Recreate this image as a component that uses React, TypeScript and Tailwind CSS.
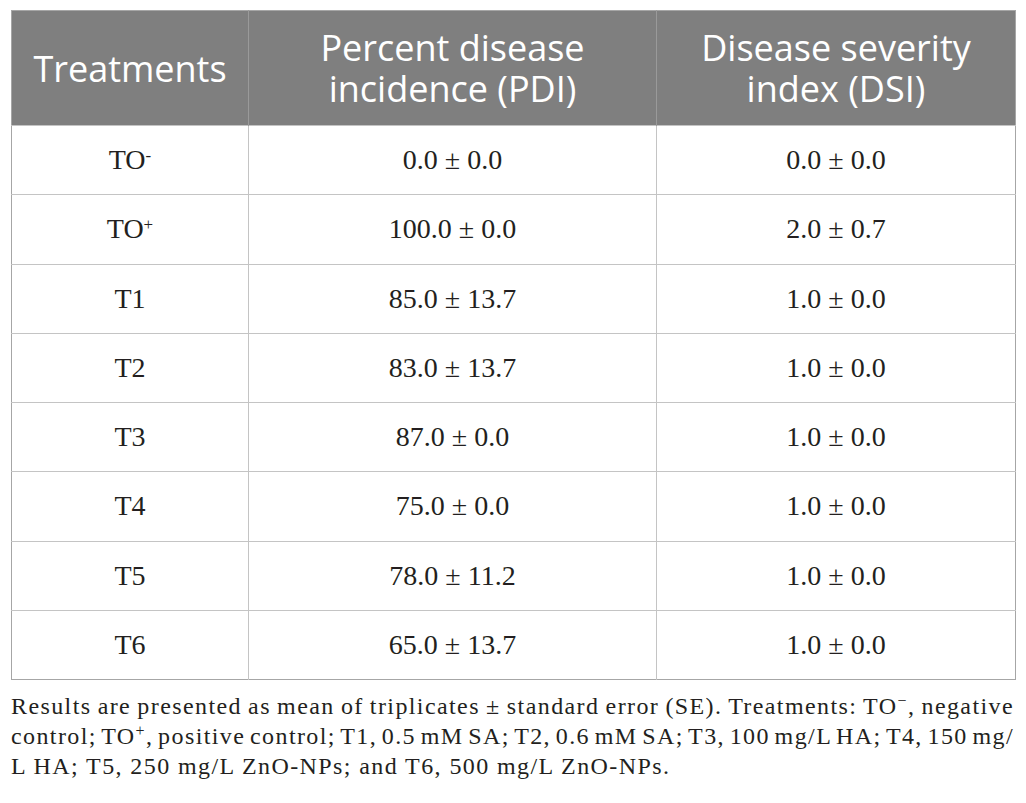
import React from 'react';

interface Row {
  treatment: React.ReactNode;
  pdi: string;
  dsi: string;
}

const rows: Row[] = [
  { treatment: <>TO<sup className="text-[17px]">-</sup></>, pdi: '0.0 ± 0.0', dsi: '0.0 ± 0.0' },
  { treatment: <>TO<sup className="text-[17px]">+</sup></>, pdi: '100.0 ± 0.0', dsi: '2.0 ± 0.7' },
  { treatment: 'T1', pdi: '85.0 ± 13.7', dsi: '1.0 ± 0.0' },
  { treatment: 'T2', pdi: '83.0 ± 13.7', dsi: '1.0 ± 0.0' },
  { treatment: 'T3', pdi: '87.0 ± 0.0', dsi: '1.0 ± 0.0' },
  { treatment: 'T4', pdi: '75.0 ± 0.0', dsi: '1.0 ± 0.0' },
  { treatment: 'T5', pdi: '78.0 ± 11.2', dsi: '1.0 ± 0.0' },
  { treatment: 'T6', pdi: '65.0 ± 13.7', dsi: '1.0 ± 0.0' },
];

export default function App() {
  return (
    <div className="min-h-[803px] w-[1026px] bg-white pl-[11px] pt-[10px]">
      <table className="w-[1004px] table-fixed border-collapse border border-[#a6a6a6]">
        <colgroup>
          <col className="w-[237px]" />
          <col className="w-[408px]" />
          <col className="w-[359px]" />
        </colgroup>
        <thead>
          {/* Header */}
          <tr className="h-[115px] bg-[#7f7f7f] font-['Open_Sans',sans-serif] text-[36px] leading-[41px] text-white">
            <th className="border-r border-[#9a9a9a] font-normal">Treatments</th>
            <th className="border-r border-[#9a9a9a] font-normal">
              Percent disease
              <br />
              incidence (PDI)
            </th>
            <th className="font-normal">
              Disease severity
              <br />
              index (DSI)
            </th>
          </tr>
        </thead>
        <tbody className="font-['Liberation_Serif',serif] text-[28px] text-[#231f20]">
          {rows.map((row, i) => (
            <tr key={i} className="h-[69.25px] border-t border-[#c4c4c4]">
              <td className="border-r border-[#c4c4c4] text-center">{row.treatment}</td>
              <td className="border-r border-[#c4c4c4] text-center">{row.pdi}</td>
              <td className="text-center">{row.dsi}</td>
            </tr>
          ))}
        </tbody>
      </table>

      {/* Footnote (justified lines) */}
      <p className="mt-[11px] w-[1003px] whitespace-nowrap font-['Liberation_Serif',serif] text-[24px] leading-[30px] tracking-[1.4px] text-[#231f20]">
        <span className="block text-justify [text-align-last:justify] [word-spacing:-2px]">
          Results are presented as mean of triplicates ± standard error (SE). Treatments: TO
          <sup className="text-[16px]">−</sup>, negative
        </span>
        <span className="block text-justify [text-align-last:justify] [word-spacing:-3.5px]">
          control; TO<sup className="text-[16px]">+</sup>, positive control; T1, 0.5 mM SA; T2, 0.6 mM SA; T3, 100 mg/L HA; T4, 150 mg/
        </span>
        <span className="block">L HA; T5, 250 mg/L ZnO-NPs; and T6, 500 mg/L ZnO-NPs.</span>
      </p>
    </div>
  );
}
